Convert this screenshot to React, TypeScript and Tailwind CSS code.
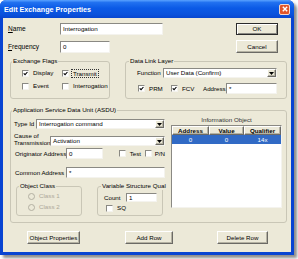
import React from "react";

const sunken =
  "bg-white border border-t-[#8a8983] border-l-[#8a8983] border-b-[#f4f3ee] border-r-[#f4f3ee]";
const raised =
  "bg-[#ece9d8] border border-t-[#ffffff] border-l-[#ffffff] border-b-[#6b6a65] border-r-[#6b6a65] shadow-[inset_-1px_-1px_0_#b5b2a3]";
const group = "border border-[#c9c6b6] rounded-[3px] p-0 m-0 min-w-0";

function Check({ checked }: { checked?: boolean }) {
  return (
    <span
      className={`w-[7px] h-[7px] shrink-0 flex items-center justify-center ${sunken}`}
    >
      {checked && (
        <svg width="5" height="5" viewBox="0 0 7 7">
          <path d="M1 3.2 L2.9 5.2 L6.2 1.4" stroke="#000" strokeWidth="1.5" fill="none" />
        </svg>
      )}
    </span>
  );
}

function Radio({ label }: { label: string }) {
  return (
    <div className="flex items-center h-[8px] gap-[4px] text-[#aca899]">
      <span className="w-[7px] h-[7px] rounded-full border border-[#b3b0a2] bg-[#ece9d8]" />
      <span>{label}</span>
    </div>
  );
}

function Select({ className, value }: { className: string; value: string }) {
  return (
    <div className={`${className} ${sunken} flex items-center`}>
      <span className="flex-1 pl-[2px] whitespace-nowrap overflow-hidden">{value}</span>
      <span className={`w-[9px] h-full flex items-center justify-center ${raised}`}>
        <svg width="5" height="3" viewBox="0 0 5 3">
          <path d="M0 0H5L2.5 3Z" fill="#000" />
        </svg>
      </span>
    </div>
  );
}

function Button({ className, children }: { className: string; children: React.ReactNode }) {
  return (
    <div className={`${className} ${raised} flex items-center justify-center whitespace-nowrap`}>
      {children}
    </div>
  );
}

export default function App() {
  return (
    <div className="w-[298px] h-[259px] bg-white font-['Liberation_Sans',Arial,sans-serif] text-[6.2px] leading-[8px] text-black">
      <div className="w-[294px] h-[255px] flex flex-col rounded-t-[6px] bg-[#0844d2] shadow-[3px_3px_3px_rgba(0,0,0,0.45)] overflow-hidden">
        {/* title bar */}
        <div className="h-[18px] shrink-0 flex items-center pl-[4px] pr-[4px] bg-[linear-gradient(to_bottom,#5aa2ff_0%,#2171f0_14%,#0b5ae6_45%,#0a52dc_80%,#0846cf_100%)]">
          <span className="flex-1 font-bold text-white text-[7.2px] leading-[9px]">
            Edit Exchange Properties
          </span>
          <span className="w-[11px] h-[11px] rounded-[2px] border border-[#f3d8cc] bg-[#e0552a] flex items-center justify-center">
            <svg width="6" height="6" viewBox="0 0 6 6">
              <path d="M0.8 0.8 L5.2 5.2 M5.2 0.8 L0.8 5.2" stroke="#fff" strokeWidth="1.4" />
            </svg>
          </span>
        </div>

        {/* client area */}
        <div className="flex-1 mx-[3px] mb-[3px] bg-[#ece9d8] flex flex-col pt-[5px]">
          {/* top block */}
          <div className="flex h-[30px]">
            <div className="w-[233px] flex flex-col">
              <div className="flex items-center h-[12px]">
                <span className="w-[57px] pl-[5px] text-[6.6px]">
                  <u>N</u>ame
                </span>
                <div className={`w-[103px] h-[12px] pl-[2px] flex items-center ${sunken}`}>
                  Interrogation
                </div>
              </div>
              <div className="flex items-center h-[12px] mt-[6px]">
                <span className="w-[57px] pl-[5px] text-[6.6px]">
                  <u>F</u>requency
                </span>
                <div className={`w-[50px] h-[12px] pl-[2px] flex items-center ${sunken}`}>0</div>
              </div>
            </div>
            <div className="w-[42px] flex flex-col">
              <div className="h-[12px] border border-[#2b2b2b] flex items-center justify-center bg-[#ece9d8] shadow-[inset_1px_1px_0_#ffffff,inset_-1px_-1px_0_#8a8983]">
                OK
              </div>
              <Button className="h-[13px] mt-[5px]">Cancel</Button>
            </div>
          </div>

          {/* groups row */}
          <div className="flex mt-[4px]">
            <fieldset className={`ml-[7px] w-[100px] h-[42px] ${group}`}>
              <legend className="ml-[1px] px-[1px] leading-[8px]">Exchange Flags</legend>
              <div className="grid grid-cols-[40px_1fr] pl-[11px] mt-[4px] gap-y-[5px]">
                <div className="flex items-center h-[8px] gap-[4px]">
                  <Check checked />
                  <span>Display</span>
                </div>
                <div className="flex items-center h-[8px] gap-[2px]">
                  <Check checked />
                  <span className="border border-dotted border-[#333] px-[1px] leading-[7px]">Transmit</span>
                </div>
                <div className="flex items-center h-[8px] gap-[4px]">
                  <Check />
                  <span>Event</span>
                </div>
                <div className="flex items-center h-[8px] gap-[3px]">
                  <Check />
                  <span className="pl-[1px]">Interrogation</span>
                </div>
              </div>
            </fieldset>

            <fieldset className={`ml-[15px] w-[162px] h-[42px] ${group}`}>
              <legend className="ml-[3px] px-[1px] leading-[8px]">Data Link Layer</legend>
              <div className="flex flex-col pl-[11px] mt-[3px]">
                <div className="flex items-center h-[10px]">
                  <span className="w-[26px]">Function</span>
                  <Select className="w-[114px] h-[10px]" value="User Data  (Confirm)" />
                </div>
                <div className="flex items-center h-[11px] mt-[5px]">
                  <div className="ml-[1px] w-[33px] flex items-center gap-[4px]">
                    <Check checked />
                    <span>PRM</span>
                  </div>
                  <div className="w-[32px] flex items-center gap-[4px]">
                    <Check checked />
                    <span>FCV</span>
                  </div>
                  <span className="w-[23px]">Address</span>
                  <div className={`w-[51px] h-[11px] pl-[2px] flex items-center ${sunken}`}>*</div>
                </div>
              </div>
            </fieldset>
          </div>

          {/* ASDU */}
          <fieldset className={`mt-[7px] ml-[7px] w-[277px] h-[117px] ${group}`}>
            <legend className="ml-[1px] px-[1px] leading-[8px]">
              Application Service Data Unit  (ASDU)
            </legend>
            <div className="flex items-start pl-[3px]">
              {/* left column */}
              <div className="w-[151px] mt-[5px] flex flex-col">
                <div className="flex items-center h-[10px]">
                  <span className="w-[22px] whitespace-nowrap">Type Id</span>
                  <Select className="w-[129px] h-[10px]" value="Interrogation command" />
                </div>
                <div className="flex items-start h-[14px] mt-[3px]">
                  <span className="w-[36px] leading-[7px] whitespace-nowrap">
                    Cause of
                    <br />
                    Transmission
                  </span>
                  <Select className="w-[115px] h-[10px] mt-[4px]" value="Activation" />
                </div>
                <div className="flex items-center h-[11px] mt-[2px]">
                  <span className="w-[52px] pl-[1px] whitespace-nowrap">Originator Address</span>
                  <div className={`w-[38px] h-[11px] pl-[2px] flex items-center ${sunken}`}>0</div>
                  <div className="ml-[16px] w-[27px] flex items-center gap-[4px]">
                    <Check />
                    <span>Test</span>
                  </div>
                  <div className="flex items-center gap-[3px]">
                    <Check />
                    <span>P/N</span>
                  </div>
                </div>
                <div className="flex items-center h-[11px] mt-[8px]">
                  <span className="w-[52px] pl-[1px] whitespace-nowrap">Common Address</span>
                  <div className={`w-[99px] h-[11px] pl-[2px] flex items-center ${sunken}`}>*</div>
                </div>
                <div className="flex mt-[4px]">
                  <fieldset className={`ml-[2px] w-[66px] h-[34px] ${group}`}>
                    <legend className="ml-[2px] px-[1px] leading-[8px]">Object Class</legend>
                    <div className="flex flex-col pl-[11px] mt-[2px] gap-[3px]">
                      <Radio label="Class 1" />
                      <Radio label="Class 2" />
                    </div>
                  </fieldset>
                  <fieldset className={`ml-[15px] w-[66px] h-[34px] ${group}`}>
                    <legend className="ml-[3px] px-[1px] leading-[8px] whitespace-nowrap">
                      Variable Structure Qual
                    </legend>
                    <div className="flex flex-col mt-[3px]">
                      <div className="flex items-center h-[9px] pl-[6px]">
                        <span className="w-[22px]">Count</span>
                        <div className={`w-[31px] h-[9px] pl-[2px] flex items-center ${sunken}`}>1</div>
                      </div>
                      <div className="flex items-center h-[8px] mt-[2px] pl-[8px] gap-[4px]">
                        <Check />
                        <span>SQ</span>
                      </div>
                    </div>
                  </fieldset>
                </div>
              </div>

              {/* right column */}
              <div className="ml-[6px] w-[111px] mt-[2px] flex flex-col">
                <div className="h-[8px] text-center text-[#333]">Information Object</div>
                <div className={`mt-[1px] h-[83px] flex flex-col ${sunken}`}>
                  <div className="flex h-[9px] font-bold">
                    <div className={`w-[37px] h-full flex items-center justify-center ${raised}`}>Address</div>
                    <div className={`w-[35px] h-full flex items-center justify-center ${raised}`}>Value</div>
                    <div className={`flex-1 h-full flex items-center justify-center ${raised}`}>Qualifier</div>
                  </div>
                  <div className="flex h-[9px] bg-[#316ac5] text-white">
                    <div className="w-[37px] flex items-center justify-center">0</div>
                    <div className="w-[35px] flex items-center justify-center">0</div>
                    <div className="flex-1 flex items-center justify-center">14x</div>
                  </div>
                </div>
              </div>
            </div>
          </fieldset>

          {/* bottom buttons */}
          <div className="flex mt-[8px]">
            <Button className="ml-[24px] w-[53px] h-[13px]">Object Properties</Button>
            <Button className="ml-[45px] w-[48px] h-[13px]">Add Row</Button>
            <Button className="ml-[44px] w-[51px] h-[13px]">Delete Row</Button>
          </div>
        </div>
      </div>
    </div>
  );
}
